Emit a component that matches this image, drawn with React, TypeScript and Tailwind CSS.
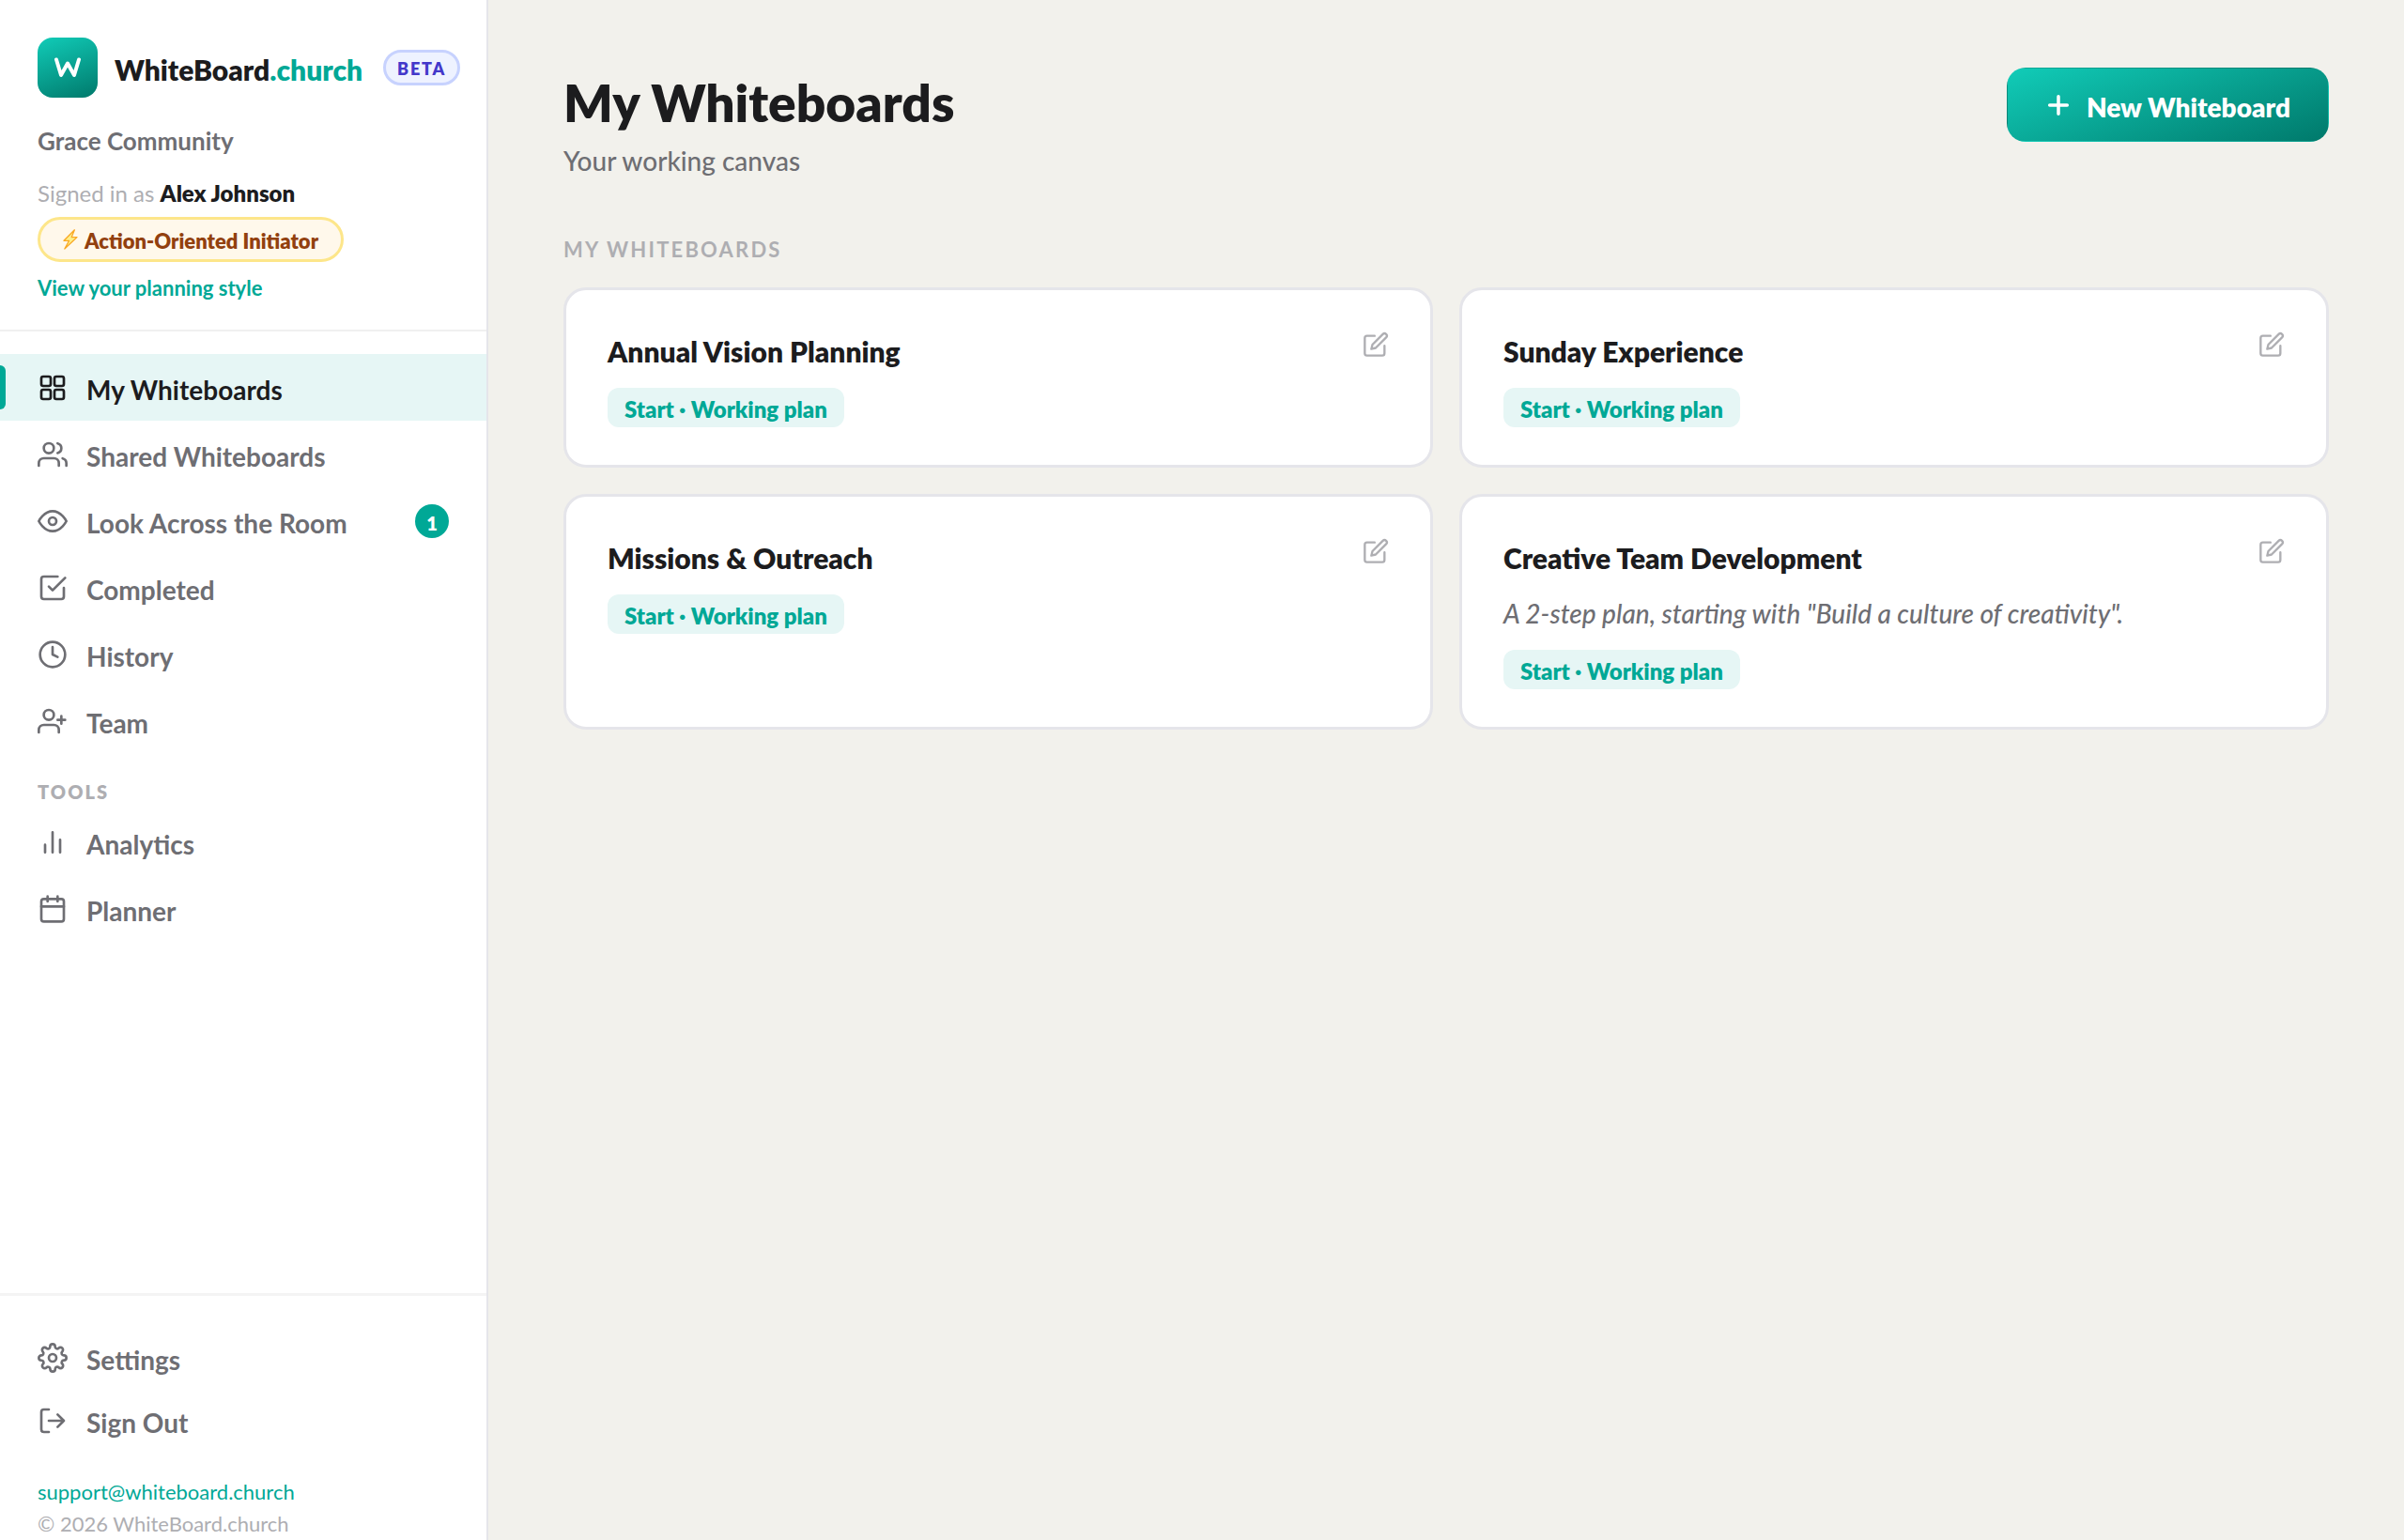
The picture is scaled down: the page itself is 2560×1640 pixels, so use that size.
import type { ReactNode } from "react";

type IconProps = { children: ReactNode; className?: string; strokeWidth?: number };

function Icon({ children, className = "size-8", strokeWidth = 2 }: IconProps) {
  return (
    <svg
      viewBox="0 0 24 24"
      fill="none"
      stroke="currentColor"
      strokeWidth={strokeWidth}
      strokeLinecap="round"
      strokeLinejoin="round"
      aria-hidden="true"
      className={`shrink-0 ${className}`}
    >
      {children}
    </svg>
  );
}

const icons = {
  grid: (
    <>
      <rect x="3" y="3" width="7.5" height="7.5" rx="1.5" />
      <rect x="13.5" y="3" width="7.5" height="7.5" rx="1.5" />
      <rect x="3" y="13.5" width="7.5" height="7.5" rx="1.5" />
      <rect x="13.5" y="13.5" width="7.5" height="7.5" rx="1.5" />
    </>
  ),
  users: (
    <>
      <path d="M17 21v-2a4 4 0 0 0-4-4H5a4 4 0 0 0-4 4v2" />
      <circle cx="9" cy="7" r="4" />
      <path d="M23 21v-2a4 4 0 0 0-3-3.87" />
      <path d="M16 3.13a4 4 0 0 1 0 7.75" />
    </>
  ),
  eye: (
    <>
      <path d="M1 12s4-8 11-8 11 8 11 8-4 8-11 8-11-8-11-8z" />
      <circle cx="12" cy="12" r="3" />
    </>
  ),
  check: (
    <>
      <path d="M9 11l3 3L22 4" />
      <path d="M21 12v7a2 2 0 0 1-2 2H5a2 2 0 0 1-2-2V5a2 2 0 0 1 2-2h11" />
    </>
  ),
  clock: (
    <>
      <circle cx="12" cy="12" r="10" />
      <path d="M12 6v6l4 2" />
    </>
  ),
  userPlus: (
    <>
      <path d="M17 21v-2a4 4 0 0 0-4-4H5a4 4 0 0 0-4 4v2" />
      <circle cx="9" cy="7" r="4" />
      <path d="M19 8v6M22 11h-6" />
    </>
  ),
  bars: <path d="M18 20V10M12 20V4M6 20v-6" />,
  calendar: (
    <>
      <rect x="3" y="4" width="18" height="18" rx="2" />
      <path d="M16 2v4M8 2v4M3 10h18" />
    </>
  ),
  settings: (
    <>
      <circle cx="12" cy="12" r="3" />
      <path d="M19.4 15a1.65 1.65 0 0 0 .33 1.82l.06.06a2 2 0 0 1 0 2.83 2 2 0 0 1-2.83 0l-.06-.06a1.65 1.65 0 0 0-1.82-.33 1.65 1.65 0 0 0-1 1.51V21a2 2 0 0 1-2 2 2 2 0 0 1-2-2v-.09A1.65 1.65 0 0 0 9 19.4a1.65 1.65 0 0 0-1.82.33l-.06.06a2 2 0 0 1-2.83 0 2 2 0 0 1 0-2.83l.06-.06a1.65 1.65 0 0 0 .33-1.82 1.65 1.65 0 0 0-1.51-1H3a2 2 0 0 1-2-2 2 2 0 0 1 2-2h.09A1.65 1.65 0 0 0 4.6 9a1.65 1.65 0 0 0-.33-1.82l-.06-.06a2 2 0 0 1 0-2.83 2 2 0 0 1 2.83 0l.06.06a1.65 1.65 0 0 0 1.82.33H9a1.65 1.65 0 0 0 1-1.51V3a2 2 0 0 1 2-2 2 2 0 0 1 2 2v.09a1.65 1.65 0 0 0 1 1.51 1.65 1.65 0 0 0 1.82-.33l.06-.06a2 2 0 0 1 2.83 0 2 2 0 0 1 0 2.83l-.06.06a1.65 1.65 0 0 0-.33 1.82V9a1.65 1.65 0 0 0 1.51 1H21a2 2 0 0 1 2 2 2 2 0 0 1-2 2h-.09a1.65 1.65 0 0 0-1.51 1z" />
    </>
  ),
  logOut: (
    <>
      <path d="M9 21H5a2 2 0 0 1-2-2V5a2 2 0 0 1 2-2h4" />
      <path d="M16 17l5-5-5-5M21 12H9" />
    </>
  ),
  edit: (
    <>
      <path d="M11 4H4a2 2 0 0 0-2 2v14a2 2 0 0 0 2 2h14a2 2 0 0 0 2-2v-7" />
      <path d="M18.5 2.5a2.121 2.121 0 0 1 3 3L12 15l-4 1 1-4 9.5-9.5z" />
    </>
  ),
  plus: <path d="M12 4v16M4 12h16" />,
};

type NavEntry = { label: string; icon: ReactNode; active?: boolean; badge?: number };

const mainNav: NavEntry[] = [
  { label: "My Whiteboards", icon: icons.grid, active: true },
  { label: "Shared Whiteboards", icon: icons.users },
  { label: "Look Across the Room", icon: icons.eye, badge: 1 },
  { label: "Completed", icon: icons.check },
  { label: "History", icon: icons.clock },
  { label: "Team", icon: icons.userPlus },
];

const toolsNav: NavEntry[] = [
  { label: "Analytics", icon: icons.bars },
  { label: "Planner", icon: icons.calendar },
];

function NavLink({ label, icon, active, badge }: NavEntry) {
  return (
    <a
      href="#"
      aria-current={active ? "page" : undefined}
      className={`relative flex h-[71px] items-center gap-5 px-10 text-[28px] leading-9 font-bold ${
        active ? "bg-[#e6f6f5] text-[#1c1c1e]" : "text-[#6e6e73]"
      }`}
    >
      {active && <span className="absolute inset-y-3 left-0 w-1.5 rounded-r-md bg-[#00a896]" />}
      <Icon>{icon}</Icon>
      <span className="pt-1">{label}</span>
      {badge !== undefined && (
        <span className="ml-auto flex size-9 items-center justify-center rounded-full bg-[#00a896] pt-1 text-[20px] leading-6 font-extrabold text-white">
          {badge}
        </span>
      )}
    </a>
  );
}

function Sidebar() {
  return (
    <aside className="flex w-[520px] shrink-0 flex-col border-r-2 border-[#e5e5ea] bg-white">
      <div className="border-b-2 border-[#f0f0f0] pt-10 pr-6 pb-[30px] pl-10">
        <div className="flex items-center">
          <span className="flex size-16 items-center justify-center rounded-2xl bg-[linear-gradient(160deg,#11ccb8,#00796b)]">
            <svg viewBox="0 0 28 22" className="h-[22px] w-7" aria-hidden="true">
              <path
                d="M2 2.5L7 19L14 6.5L21 19L26 2.5"
                fill="none"
                stroke="#ffffff"
                strokeWidth="4"
                strokeLinecap="round"
                strokeLinejoin="round"
              />
            </svg>
          </span>
          <span className="ml-[18px] pt-1 text-[30px] leading-9 font-extrabold text-[#1c1c1e]">
            WhiteBoard<span className="text-[#00a896]">.church</span>
          </span>
          <span className="ml-[22px] rounded-full border-[3px] border-[#c7d2fe] bg-[#eef2ff] px-3 pt-1 pb-0.5 text-[18px] leading-[26px] font-extrabold tracking-widest text-[#4338ca]">
            BETA
          </span>
        </div>
        <p className="mt-[30px] text-[26px] leading-8 font-bold text-[#6e6e73]">Grace Community</p>
        <p className="mt-6 text-[24px] leading-8 text-[#aeaeb2]">
          Signed in as <strong className="font-extrabold text-[#1c1c1e]">Alex Johnson</strong>
        </p>
        <div className="mt-[9px] flex h-12 w-fit items-center gap-[7px] rounded-full border-[3px] border-[#fde68a] bg-[#fff8eb] px-6 text-[22px] leading-7 font-extrabold text-[#92400e]">
          <svg viewBox="0 0 16 22" className="h-[22px] w-4" aria-hidden="true">
            <path
              d="M12.4 .8L1 12.3H6.6L1.8 21L15 8.6H9.2Z"
              fill="#fef08a"
              stroke="#f9a825"
              strokeWidth="1.3"
              strokeLinejoin="round"
            />
          </svg>
          <span className="pt-1">Action-Oriented Initiator</span>
        </div>
        <a href="#" className="mt-[14px] block text-[22px] leading-7 font-bold text-[#00a896]">
          View your planning style
        </a>
      </div>

      <nav aria-label="Main" className="pt-6">
        {mainNav.map((item) => (
          <NavLink key={item.label} {...item} />
        ))}
        <h2 className="px-10 pt-7 pb-1.5 text-[20px] leading-6 font-extrabold tracking-widest text-[#aeaeb2]">
          TOOLS
        </h2>
        {toolsNav.map((item) => (
          <NavLink key={item.label} {...item} />
        ))}
      </nav>

      <div className="mt-auto border-t-[3px] border-[#f4f4f4] pt-8">
        {[
          { label: "Settings", icon: icons.settings },
          { label: "Sign Out", icon: icons.logOut },
        ].map(({ label, icon }) => (
          <button
            key={label}
            type="button"
            className="flex h-[67px] w-full items-center gap-5 px-10 text-[28px] leading-9 font-bold text-[#6e6e73]"
          >
            <Icon>{icon}</Icon>
            <span className="pt-1">{label}</span>
          </button>
        ))}
        <div className="mt-[26px] px-10 text-[22px] leading-[34px]">
          <a href="mailto:support@whiteboard.church" className="block text-[#00a896]">
            support@whiteboard.church
          </a>
          <p className="text-[#aeaeb2]">© 2026 WhiteBoard.church</p>
        </div>
      </div>
    </aside>
  );
}

const boards = [
  { title: "Annual Vision Planning" },
  { title: "Sunday Experience" },
  { title: "Missions & Outreach" },
  {
    title: "Creative Team Development",
    description: 'A 2-step plan, starting with "Build a culture of creativity".',
  },
];

function BoardCard({ title, description }: { title: string; description?: string }) {
  return (
    <article className="flex items-start justify-between rounded-3xl border-[3px] border-[#e5e5ea] bg-white px-11 pt-11 pb-10">
      <div>
        <h3 className="text-[30px] leading-[42px] font-extrabold text-[#1c1c1e]">{title}</h3>
        {description && (
          <p className="mt-[18px] text-[28px] leading-[41px] font-medium text-[#6e6e73] italic">{description}</p>
        )}
        <span className="mt-[18px] flex h-[42px] w-fit items-center rounded-xl bg-[#e6f6f5] px-[18px] pt-1 text-[24px] leading-8 font-extrabold text-[#00a896]">
          Start · Working plan
        </span>
      </div>
      <button type="button" aria-label={`Edit ${title}`} className="text-[#aeaeb2]">
        <Icon className="size-7">{icons.edit}</Icon>
      </button>
    </article>
  );
}

export default function App() {
  return (
    <div className="flex min-h-screen bg-[#f2f1ec] font-['Lato',sans-serif]">
      <Sidebar />
      <main className="min-w-0 flex-1 px-20 pt-[72px]">
        <header className="flex items-start justify-between">
          <div>
            <h1 className="text-[55px] leading-[75px] font-extrabold text-[#1c1c1e]">My Whiteboards</h1>
            <p className="mt-1 text-[28px] leading-10 font-medium text-[#6e6e73]">Your working canvas</p>
          </div>
          <button
            type="button"
            className="flex h-[79px] items-center gap-4 rounded-[20px] border border-transparent bg-[linear-gradient(160deg,#11ccb8,#00796b)] px-10 text-[28px] leading-9 font-extrabold text-white"
          >
            <Icon className="size-7" strokeWidth={3}>
              {icons.plus}
            </Icon>
            <span className="pt-1">New Whiteboard</span>
          </button>
        </header>
        <h2 className="mt-[61px] text-[22px] leading-7 font-bold tracking-widest text-[#aeaeb2]">MY WHITEBOARDS</h2>
        <section aria-label="My whiteboards" className="mt-[26px] grid grid-cols-2 gap-7">
          {boards.map((board) => (
            <BoardCard key={board.title} {...board} />
          ))}
        </section>
      </main>
    </div>
  );
}
